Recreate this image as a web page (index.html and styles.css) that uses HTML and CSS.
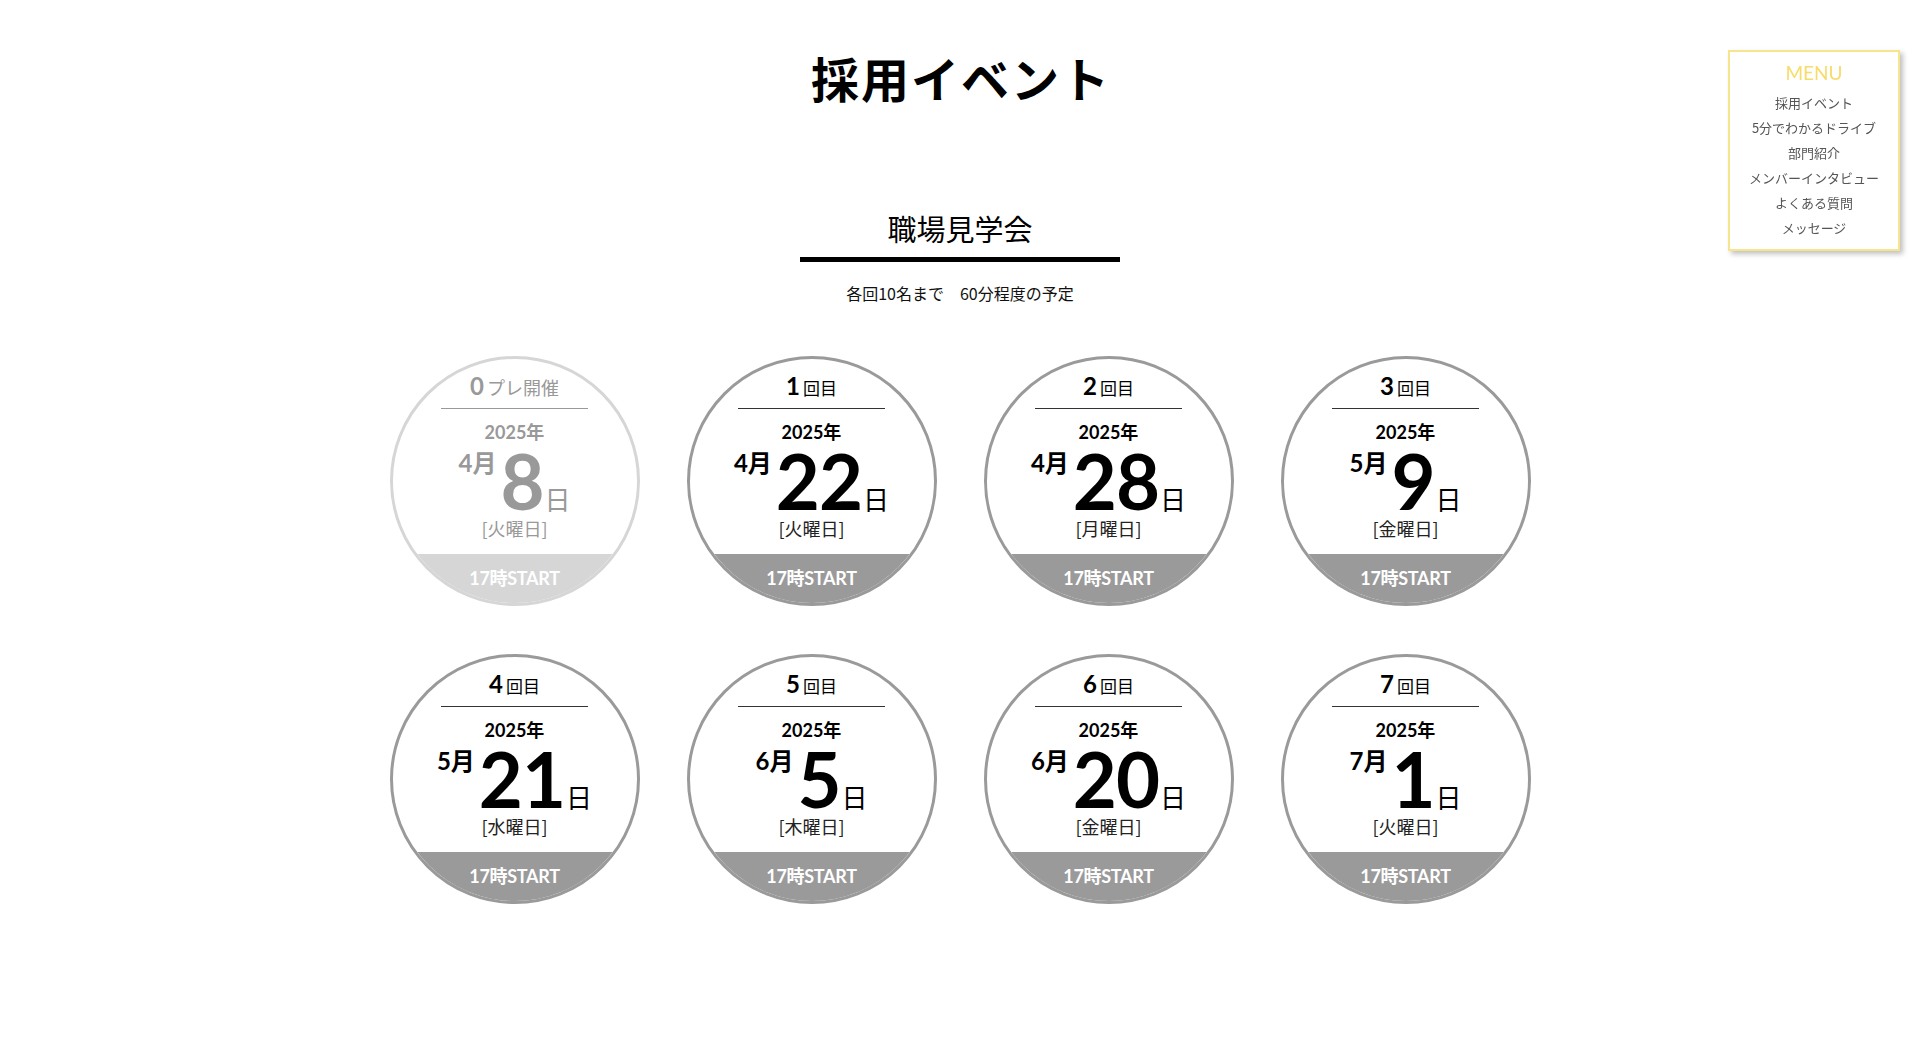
FILE: index.html
```html
<!DOCTYPE html>
<html lang="ja">
<head>
<meta charset="utf-8">
<title>採用イベント</title>
<link rel="stylesheet" href="styles.css">
</head>
<body>
<main class="page">
  <h1 class="page-title">採用イベント</h1>
  <section class="event">
    <h2 class="event-title">職場見学会</h2>
    <p class="event-note">各回10名まで　60分程度の予定</p>
    <ul class="schedule">
      <li class="round round--pre">
        <div class="round-head"><span class="round-num">0</span><span class="round-unit round-unit--pre">プレ開催</span></div>
        <div class="round-year">2025年</div>
        <div class="round-date"><span class="round-month">4月</span><span class="round-day">8</span><span class="round-dayunit">日</span></div>
        <div class="round-week">[火曜日]</div>
        <div class="round-start">17時START</div>
      </li>
      <li class="round">
        <div class="round-head"><span class="round-num">1</span><span class="round-unit">回目</span></div>
        <div class="round-year">2025年</div>
        <div class="round-date"><span class="round-month">4月</span><span class="round-day">22</span><span class="round-dayunit">日</span></div>
        <div class="round-week">[火曜日]</div>
        <div class="round-start">17時START</div>
      </li>
      <li class="round">
        <div class="round-head"><span class="round-num">2</span><span class="round-unit">回目</span></div>
        <div class="round-year">2025年</div>
        <div class="round-date"><span class="round-month">4月</span><span class="round-day">28</span><span class="round-dayunit">日</span></div>
        <div class="round-week">[月曜日]</div>
        <div class="round-start">17時START</div>
      </li>
      <li class="round">
        <div class="round-head"><span class="round-num">3</span><span class="round-unit">回目</span></div>
        <div class="round-year">2025年</div>
        <div class="round-date"><span class="round-month">5月</span><span class="round-day">9</span><span class="round-dayunit">日</span></div>
        <div class="round-week">[金曜日]</div>
        <div class="round-start">17時START</div>
      </li>
      <li class="round">
        <div class="round-head"><span class="round-num">4</span><span class="round-unit">回目</span></div>
        <div class="round-year">2025年</div>
        <div class="round-date"><span class="round-month">5月</span><span class="round-day">21</span><span class="round-dayunit">日</span></div>
        <div class="round-week">[水曜日]</div>
        <div class="round-start">17時START</div>
      </li>
      <li class="round">
        <div class="round-head"><span class="round-num">5</span><span class="round-unit">回目</span></div>
        <div class="round-year">2025年</div>
        <div class="round-date"><span class="round-month">6月</span><span class="round-day">5</span><span class="round-dayunit">日</span></div>
        <div class="round-week">[木曜日]</div>
        <div class="round-start">17時START</div>
      </li>
      <li class="round">
        <div class="round-head"><span class="round-num">6</span><span class="round-unit">回目</span></div>
        <div class="round-year">2025年</div>
        <div class="round-date"><span class="round-month">6月</span><span class="round-day">20</span><span class="round-dayunit">日</span></div>
        <div class="round-week">[金曜日]</div>
        <div class="round-start">17時START</div>
      </li>
      <li class="round">
        <div class="round-head"><span class="round-num">7</span><span class="round-unit">回目</span></div>
        <div class="round-year">2025年</div>
        <div class="round-date"><span class="round-month">7月</span><span class="round-day">1</span><span class="round-dayunit">日</span></div>
        <div class="round-week">[火曜日]</div>
        <div class="round-start">17時START</div>
      </li>
    </ul>
  </section>
</main>
<nav class="menu">
  <p class="menu-title">MENU</p>
  <ul class="menu-list">
    <li>採用イベント</li>
    <li>5分でわかるドライブ</li>
    <li>部門紹介</li>
    <li>メンバーインタビュー</li>
    <li>よくある質問</li>
    <li>メッセージ</li>
  </ul>
</nav>
</body>
</html>
```

FILE: styles.css
```css
html, body {
  margin: 0;
  padding: 0;
  background: #fff;
}

body {
  font-family: "Noto Sans CJK JP", "Noto Sans", sans-serif;
  color: #000;
}

.page {
  padding-top: 53px;
  padding-bottom: 80px;
}

.page-title {
  margin: 0;
  padding-left: 2px;
  text-align: center;
  font-size: 48px;
  line-height: 48px;
  font-weight: 700;
  letter-spacing: 2px;
}

.event {
  display: flex;
  flex-direction: column;
  align-items: center;
  margin-top: 113px;
}

.event-title {
  width: 320px;
  margin: 0;
  padding-bottom: 14px;
  border-bottom: 5px solid #000;
  text-align: center;
  font-size: 29px;
  line-height: 29px;
  font-weight: 400;
}

.event-note {
  margin: 23px 0 0;
  font-size: 16px;
  line-height: 16px;
  color: #111;
}

.schedule {
  list-style: none;
  margin: 55px 0 0;
  padding: 0;
  display: grid;
  grid-template-columns: repeat(4, 250px);
  column-gap: 47px;
  row-gap: 48px;
  justify-content: center;
}

.round {
  width: 250px;
  height: 250px;
  box-sizing: border-box;
  border: 3px solid #9a9a9a;
  border-radius: 50%;
  overflow: hidden;
  display: flex;
  flex-direction: column;
  align-items: center;
  font-family: "Lato", "Noto Sans CJK JP", sans-serif;
  color: #000;
  background: #fff;
}

.round-head {
  width: 147px;
  height: 50px;
  box-sizing: border-box;
  padding-top: 15px;
  border-bottom: 1px solid #333;
  display: flex;
  justify-content: center;
  align-items: baseline;
}

.round-num {
  font-size: 24px;
  line-height: 24px;
  font-weight: 700;
}

.round-unit {
  margin-left: 3px;
  font-family: "Noto Sans CJK JP", sans-serif;
  font-size: 17px;
  line-height: 24px;
  font-weight: 400;
}

.round-unit--pre {
  font-size: 18px;
}

.round-year {
  margin-top: 14px;
  font-size: 18px;
  line-height: 18px;
  font-weight: 700;
}

.round-date {
  display: flex;
  align-items: baseline;
  margin-top: 2px;
}

.round-month {
  align-self: flex-start;
  margin-right: 4px;
  font-size: 24px;
  line-height: 40px;
  font-weight: 700;
}

.round-day {
  font-size: 76px;
  line-height: 76px;
  font-weight: 700;
  letter-spacing: -1px;
}

.round-dayunit {
  margin-left: 1px;
  font-family: "Noto Sans CJK JP", sans-serif;
  font-size: 26px;
  line-height: 26px;
  font-weight: 400;
}

.round-week {
  font-family: "Noto Sans CJK JP", sans-serif;
  font-size: 18px;
  line-height: 18px;
  color: #222;
}

.round-start {
  align-self: stretch;
  margin-top: auto;
  height: 49px;
  background: #9a9a9a;
  color: #fff;
  text-align: center;
  font-size: 18px;
  line-height: 49px;
  font-weight: 700;
  letter-spacing: -0.3px;
}

/* pre-event (muted) */
.round--pre {
  border-color: #d6d6d6;
  color: #999;
}

.round--pre .round-head {
  border-bottom-color: #999;
}

.round--pre .round-week {
  color: #999;
}

.round--pre .round-start {
  background: #d6d6d6;
  color: #fff;
}

/* side menu */
.menu {
  position: fixed;
  top: 50px;
  right: 20px;
  width: 172px;
  height: 201px;
  box-sizing: border-box;
  border: 2px solid #f6e58d;
  background: #fff;
  box-shadow: 3px 3px 5px rgba(0, 0, 0, 0.25);
  padding-top: 6px;
  text-align: center;
}

.menu-title {
  margin: 0;
  font-family: "Lato", sans-serif;
  font-size: 19px;
  line-height: 30px;
  font-weight: 400;
  color: #f7dc6b;
}

.menu-list {
  list-style: none;
  margin: 2px 0 0;
  padding: 0;
  font-family: "Noto Sans CJK JP", sans-serif;
  font-size: 13px;
  line-height: 25px;
  color: #555;
}
```
